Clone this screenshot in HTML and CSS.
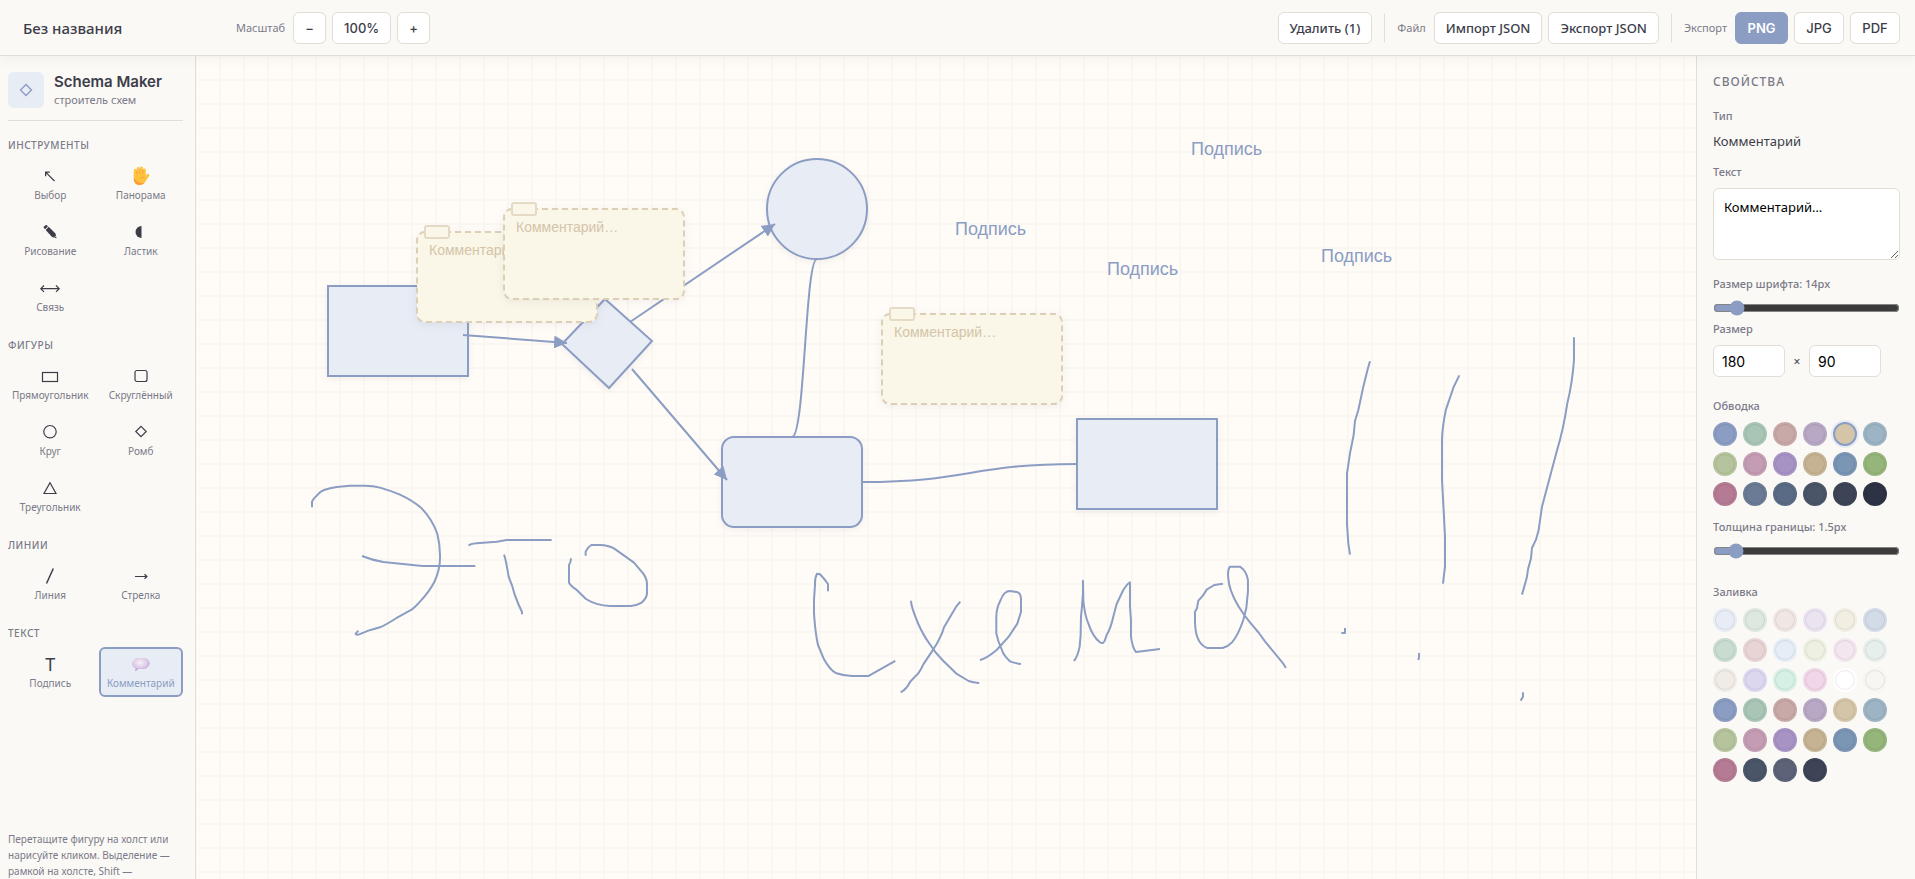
FILE: index.html
```html
<!DOCTYPE html>
<html lang="ru">
  <head>
    <meta charset="UTF-8" />
    <meta name="viewport" content="width=device-width, initial-scale=1.0" />
    <title>Schema Maker</title>
    <link rel="stylesheet" href="styles.css">
  </head>
  <body>
    <div class="app">
      <header class="topbar">
        <input type="text" class="doc-title" value="Без названия" aria-label="Название документа" />
        <div class="toolbar zoom-group">
          <span class="toolbar-label">Масштаб</span>
          <button class="btn btn-icon">−</button>
          <button class="btn btn-zoom">100%</button>
          <button class="btn btn-icon">+</button>
        </div>
        <div class="toolbar file-group">
          <button class="btn">Удалить (1)</button>
          <span class="divider"></span>
          <span class="toolbar-label">Файл</span>
          <button class="btn">Импорт JSON</button>
          <button class="btn">Экспорт JSON</button>
          <span class="divider"></span>
          <span class="toolbar-label">Экспорт</span>
          <button class="btn btn-format btn-primary">PNG</button>
          <button class="btn btn-format">JPG</button>
          <button class="btn btn-format">PDF</button>
        </div>
      </header>

      <div class="workspace">
        <aside class="sidebar">
          <div class="brand">
            <div class="brand-logo">
              <svg width="14" height="14" viewBox="0 0 14 14"><path d="M7 1.5L12.5 7L7 12.5L1.5 7Z" fill="none" stroke="#8b9dc3" stroke-width="1.4" /></svg>
            </div>
            <div>
              <h1 class="brand-name">Schema Maker</h1>
              <p class="brand-sub">строитель схем</p>
            </div>
          </div>

          <section class="tool-section">
            <h2 class="section-title">Инструменты</h2>
            <div class="tool-grid">
              <button class="tool">
                <svg class="tool-icon" viewBox="0 0 24 24"><path d="M16.5 17L7.6 8.1M7.6 12.3V8.1H11.8" /></svg>
                <span>Выбор</span>
              </button>
              <button class="tool">
                <svg class="tool-icon" viewBox="0 0 24 24">
                  <g fill="none" stroke="#ffc23d" stroke-width="2.8" stroke-linecap="round">
                    <path d="M6.2 12V6.5M9.2 10V4.3M12.3 10V4M15.3 11V5.8M15.5 16L19 11.2" />
                  </g>
                  <path d="M4.8 9.5H16.7V13L18 13.5C17 18 14.500 21 10.500 21C7 21 4.800 18.500 4.800 14.500Z" fill="#ffc23d" stroke="none" />
                  <path d="M4.800 14.500C4.900 18.500 7 21 10.500 21C12.800 21 14.500 20 15.600 18.500C12 20 8 18.500 6.500 15.500Z" fill="#ff9b35" stroke="none" />
                  <path d="M7.700 6.500V10M10.800 5V9.800M13.800 5.500V10.200M11.500 14.500C12.500 13.200 14 13 15.300 13.500" stroke="#f0972c" stroke-width=".7" />
                </svg>
                <span>Панорама</span>
              </button>
              <button class="tool">
                <svg class="tool-icon" viewBox="0 0 24 24">
                  <path d="M6 6.500L8.200 4.800L10 6.200L7.200 9.200L5.500 7.500Z M10.700 6.800L17.500 13.500L18.500 18.200L14 17L7.700 10Z" class="solid" />
                  <path d="M16.300 17.500L18 15.800" stroke="#faf9f6" stroke-width=".8" />
                </svg>
                <span>Рисование</span>
              </button>
              <button class="tool">
                <svg class="tool-icon" viewBox="0 0 24 24"><path d="M12.500 6A6 6 0 0 0 12.500 18Z" class="solid" /></svg>
                <span>Ластик</span>
              </button>
              <button class="tool">
                <svg class="tool-icon" viewBox="0 0 24 24"><path d="M2.800 12.700H21.200M6 9.500L2.800 12.700L6 15.900M18 9.500L21.200 12.700L18 15.900" /></svg>
                <span>Связь</span>
              </button>
            </div>
          </section>

          <section class="tool-section">
            <h2 class="section-title">Фигуры</h2>
            <div class="tool-grid">
              <button class="tool">
                <svg class="tool-icon" viewBox="0 0 24 24"><rect x="4.500" y="8.500" width="15" height="9" /></svg>
                <span>Прямоугольник</span>
              </button>
              <button class="tool">
                <svg class="tool-icon" viewBox="0 0 24 24"><rect x="6" y="6.500" width="12" height="11" rx="2" /></svg>
                <span>Скруглённый</span>
              </button>
              <button class="tool">
                <svg class="tool-icon" viewBox="0 0 24 24"><circle cx="12" cy="11.700" r="6.200" /></svg>
                <span>Круг</span>
              </button>
              <button class="tool">
                <svg class="tool-icon" viewBox="0 0 24 24"><path d="M12 6.300L17.200 11.500L12 16.700L6.800 11.500Z" /></svg>
                <span>Ромб</span>
              </button>
              <button class="tool">
                <svg class="tool-icon" viewBox="0 0 24 24"><path d="M12 6.800L18 17.500H6Z" /></svg>
                <span>Треугольник</span>
              </button>
            </div>
          </section>

          <section class="tool-section">
            <h2 class="section-title">Линии</h2>
            <div class="tool-grid">
              <button class="tool">
                <svg class="tool-icon" viewBox="0 0 24 24"><path d="M8.500 19.500L15.300 4.500" stroke-width="1.500" /></svg>
                <span>Линия</span>
              </button>
              <button class="tool">
                <svg class="tool-icon" viewBox="0 0 24 24"><path d="M6 12.500H18M15.500 10.200L18 12.500L15.500 14.800" /></svg>
                <span>Стрелка</span>
              </button>
            </div>
          </section>

          <section class="tool-section">
            <h2 class="section-title">Текст</h2>
            <div class="tool-grid">
              <button class="tool">
                <span class="tool-glyph">T</span>
                <span>Подпись</span>
              </button>
              <button class="tool active">
                <svg class="tool-icon" viewBox="0 0 24 24">
                  <defs>
                    <radialGradient id="bubble" cx="45%" cy="35%" r="65%">
                      <stop offset="0" stop-color="#f8f0f8" />
                      <stop offset=".6" stop-color="#dccbe6" />
                      <stop offset="1" stop-color="#b195d2" />
                    </radialGradient>
                  </defs>
                  <path d="M9 6H15.500C18.500 6.300 20.500 9 21 11.500C20 14.500 17.500 16.800 14.500 17H9.500L6.300 19.200L6.500 16.200C4.500 15 3.300 13.500 3 11.500C3.800 8.500 6 6.200 9 6Z" fill="url(#bubble)" stroke="none" />
                </svg>
                <span>Комментарий</span>
              </button>
            </div>
          </section>

          <p class="hint">Перетащите фигуру на холст или нарисуйте кликом. Выделение — рамкой на холсте, Shift —</p>
        </aside>

        <main class="canvas">
          <svg class="canvas-svg" width="100%" height="100%">
            <defs>
              <pattern id="grid" width="24" height="24" patternUnits="userSpaceOnUse">
                <path d="M0 0H24M0 24H24M0 0V24M24 0V24" class="grid-line" />
              </pattern>
              <marker id="arrow" viewBox="0 0 12 12" refX="12" refY="6" markerWidth="13" markerHeight="13" markerUnits="userSpaceOnUse" orient="auto">
                <path d="M0 0L12 6L0 12Z" fill="#8b9dc3" />
              </marker>
            </defs>
            <rect width="100%" height="100%" fill="url(#grid)" />

            <g transform="translate(-196 -56)">
              <!-- фигуры -->
              <rect class="shape" x="328" y="286" width="140" height="90" />
              <path class="shape" d="M605 299L652 341L609 388L562 344Z" />
              <circle class="shape" cx="817" cy="209" r="50" />
              <rect class="shape" x="722" y="437" width="140" height="90" rx="12" />
              <rect class="shape" x="1077" y="419" width="140" height="90" />

              <!-- связи и стрелки -->
              <path class="link" d="M817 259C805 259 805 437 792 437" />
              <path class="link" d="M862 482C970 482 970 464 1077 464" />
              <path class="link" d="M463 335L567 343" marker-end="url(#arrow)" />
              <path class="link" d="M630 322L775 224" marker-end="url(#arrow)" />
              <path class="link" d="M632 369L727 480" marker-end="url(#arrow)" />

              <!-- комментарии -->
              <g class="note" transform="translate(417 232)">
                <rect class="note-body" width="180" height="90" rx="8" />
                <rect class="note-tab" x="8" y="-6" width="24" height="12" rx="2" />
                <text x="12" y="23">Комментарий…</text>
              </g>
              <g class="note" transform="translate(504 209)">
                <rect class="note-body" width="180" height="90" rx="8" />
                <rect class="note-tab" x="8" y="-6" width="24" height="12" rx="2" />
                <text x="12" y="23">Комментарий…</text>
              </g>
              <g class="note" transform="translate(882 314)">
                <rect class="note-body" width="180" height="90" rx="8" />
                <rect class="note-tab" x="8" y="-6" width="24" height="12" rx="2" />
                <text x="12" y="23">Комментарий…</text>
              </g>

              <!-- подписи -->
              <text class="caption" x="1191" y="155">Подпись</text>
              <text class="caption" x="955" y="235">Подпись</text>
              <text class="caption" x="1107" y="275">Подпись</text>
              <text class="caption" x="1321" y="262">Подпись</text>

              <!-- рисование от руки -->
              <g class="ink" transform="translate(300 460) scale(.3333)">
                <path d="M36 142V125Q40 115 50 107Q60 94 72 90Q90 84 110 81L150 77H195Q220 77 240 83Q275 93 300 104Q340 123 365 145Q398 180 412 222Q421 255 420 295Q420 330 403 366Q388 395 360 425Q347 440 336 448L290 474Q255 496 240 502Q222 507 205 512L185 520Q168 528 167 521L175 512" />
                <path d="M186 288Q215 300 250 306L360 317Q370 318 380 318H526" />
                <path d="M506 257Q510 252 530 250L590 245L620 240H755" />
                <path d="M612 284Q617 295 626 350L636 376Q643 405 655 432L666 456V463" />
                <path d="M857 287V275Q862 262 874 255H900Q925 256 942 265L1002 308L1030 341Q1041 358 1041 370V402Q1039 415 1025 428Q1010 437 992 438H930Q890 437 858 417L828 388Q810 376 807 367V315Q813 308 813 295" />
              </g>
              <g class="ink" transform="translate(780 540) scale(.3333)">
                <path d="M144 154V132Q132 115 120 103L111 101Q104 115 105 135L102 180V220Q106 280 114 315L132 358Q150 390 167 399Q190 407 215 408H266L346 363" />
                <path d="M393 182Q393 200 415 252Q430 285 445 306Q465 338 488 361L528 400L566 423Q580 428 595 429V426" />
                <path d="M541 185L528 201L492 262Q487 282 470 312L460 328L430 373Q418 400 405 410L390 426Q380 448 362 457" />
                <path d="M600 360Q620 355 650 330L687 289L712 251L723 216V175Q722 158 710 156L690 153Q672 153 662 180Q649 205 649 230V280Q653 302 665 328Q670 346 690 364Q705 370 723 372" />
                <path d="M882 363Q893 350 899 320L902 285L903 230L906 200L909 160V122L910 180Q914 225 925 250Q938 290 960 307Q971 313 975 300L980 285Q992 265 1000 230L1010 192L1030 150Q1043 130 1050 127V200L1053 240V290Q1058 325 1068 336L1140 327" />
                <path d="M1329 131L1303 135L1280 149Q1270 168 1255 182L1251 205L1245 216V245Q1246 285 1258 304Q1268 320 1282 324H1328Q1345 319 1356 307Q1375 285 1390 240L1399 205L1404 155V120Q1399 92 1380 80H1350Q1342 90 1345 115Q1347 150 1375 198Q1390 223 1410 247L1437 279L1455 304L1510 371L1518 384" />
              </g>
              <g class="ink" transform="translate(1280 320) scale(.3333)">
                <path d="M270 124L263 148L250 200L235 270L225 303L221 345L210 400L201 460V612L205 670L210 704" />
                <path d="M538 166L521 201L498 268Q487 320 486 360V480L492 590L495 650V740L489 791" />
                <path d="M882 52V120Q877 190 862 250Q850 330 830 395L786 560L776 630L768 659L756 684L753 715Q743 745 740 775L726 824" />
                <path d="M195 924V939H184" />
                <path d="M417 999V1012L415 1020" />
                <path d="M729 1117V1130L722 1142" />
              </g>
            </g>
          </svg>
        </main>

        <aside class="props">
          <h2 class="props-title">Свойства</h2>
          <div class="field">
            <span class="field-label">Тип</span>
            <span class="field-value">Комментарий</span>
          </div>
          <div class="field">
            <label class="field-label" for="text">Текст</label>
            <textarea id="text" class="text-input">Комментарий…</textarea>
          </div>
          <div class="field field-font">
            <label class="field-label" for="fontSize">Размер шрифта: 14px</label>
            <input type="range" id="fontSize" min="8" max="72" value="14" />
          </div>
          <div class="field field-size">
            <label class="field-label" for="sizeW">Размер</label>
            <div class="size-row">
              <input type="text" id="sizeW" class="num-input" value="180" />
              <span>×</span>
              <input type="text" class="num-input" value="90" aria-label="Высота" />
            </div>
          </div>
          <div class="field field-palette">
            <span class="field-label">Обводка</span>
            <div class="swatches">
              <button class="swatch" style="background-color: #8b9dc3" aria-label="#8b9dc3"></button>
              <button class="swatch" style="background-color: #a8c5b5" aria-label="#a8c5b5"></button>
              <button class="swatch" style="background-color: #c9a8a8" aria-label="#c9a8a8"></button>
              <button class="swatch" style="background-color: #b8a8c5" aria-label="#b8a8c5"></button>
              <button class="swatch selected" style="background-color: #d4c5a8" aria-label="#d4c5a8"></button>
              <button class="swatch" style="background-color: #9db4c5" aria-label="#9db4c5"></button>
              <button class="swatch" style="background-color: #b5c49d" aria-label="#b5c49d"></button>
              <button class="swatch" style="background-color: #c49db5" aria-label="#c49db5"></button>
              <button class="swatch" style="background-color: #a893c5" aria-label="#a893c5"></button>
              <button class="swatch" style="background-color: #c5b393" aria-label="#c5b393"></button>
              <button class="swatch" style="background-color: #7b95b5" aria-label="#7b95b5"></button>
              <button class="swatch" style="background-color: #95b57b" aria-label="#95b57b"></button>
              <button class="swatch" style="background-color: #b57b95" aria-label="#b57b95"></button>
              <button class="swatch" style="background-color: #6b7b95" aria-label="#6b7b95"></button>
              <button class="swatch" style="background-color: #5a6b85" aria-label="#5a6b85"></button>
              <button class="swatch" style="background-color: #4a5568" aria-label="#4a5568"></button>
              <button class="swatch" style="background-color: #3d4455" aria-label="#3d4455"></button>
              <button class="swatch" style="background-color: #2d3345" aria-label="#2d3345"></button>
            </div>
          </div>
          <div class="field field-stroke">
            <label class="field-label" for="strokeWidth">Толщина границы: 1.5px</label>
            <input type="range" id="strokeWidth" min="0.5" max="12" step="0.5" value="1.5" />
          </div>
          <div class="field field-fill">
            <span class="field-label">Заливка</span>
            <div class="swatches">
              <button class="swatch" style="background-color: #e8ecf5" aria-label="#e8ecf5"></button>
              <button class="swatch" style="background-color: #dde8e0" aria-label="#dde8e0"></button>
              <button class="swatch" style="background-color: #f0e6e4" aria-label="#f0e6e4"></button>
              <button class="swatch" style="background-color: #ebe3f0" aria-label="#ebe3f0"></button>
              <button class="swatch" style="background-color: #f3eee2" aria-label="#f3eee2"></button>
              <button class="swatch" style="background-color: #d4dbe8" aria-label="#d4dbe8"></button>
              <button class="swatch" style="background-color: #c8ddd0" aria-label="#c8ddd0"></button>
              <button class="swatch" style="background-color: #e8d4d4" aria-label="#e8d4d4"></button>
              <button class="swatch" style="background-color: #e5eef6" aria-label="#e5eef6"></button>
              <button class="swatch" style="background-color: #eef0e2" aria-label="#eef0e2"></button>
              <button class="swatch" style="background-color: #f3e6ef" aria-label="#f3e6ef"></button>
              <button class="swatch" style="background-color: #e6efec" aria-label="#e6efec"></button>
              <button class="swatch" style="background-color: #f0ebe5" aria-label="#f0ebe5"></button>
              <button class="swatch" style="background-color: #ddd6f0" aria-label="#ddd6f0"></button>
              <button class="swatch" style="background-color: #d6f0e6" aria-label="#d6f0e6"></button>
              <button class="swatch" style="background-color: #f0d6e8" aria-label="#f0d6e8"></button>
              <button class="swatch" style="background-color: #ffffff" aria-label="#ffffff"></button>
              <button class="swatch" style="background-color: #f8f6f2" aria-label="#f8f6f2"></button>
              <button class="swatch" style="background-color: #8b9dc3" aria-label="#8b9dc3"></button>
              <button class="swatch" style="background-color: #a8c5b5" aria-label="#a8c5b5"></button>
              <button class="swatch" style="background-color: #c9a8a8" aria-label="#c9a8a8"></button>
              <button class="swatch" style="background-color: #b8a8c5" aria-label="#b8a8c5"></button>
              <button class="swatch" style="background-color: #d4c5a8" aria-label="#d4c5a8"></button>
              <button class="swatch" style="background-color: #9db4c5" aria-label="#9db4c5"></button>
              <button class="swatch" style="background-color: #b5c49d" aria-label="#b5c49d"></button>
              <button class="swatch" style="background-color: #c49db5" aria-label="#c49db5"></button>
              <button class="swatch" style="background-color: #a893c5" aria-label="#a893c5"></button>
              <button class="swatch" style="background-color: #c5b393" aria-label="#c5b393"></button>
              <button class="swatch" style="background-color: #7b95b5" aria-label="#7b95b5"></button>
              <button class="swatch" style="background-color: #95b57b" aria-label="#95b57b"></button>
              <button class="swatch" style="background-color: #b57b95" aria-label="#b57b95"></button>
              <button class="swatch" style="background-color: #4a5568" aria-label="#4a5568"></button>
              <button class="swatch" style="background-color: #5c6378" aria-label="#5c6378"></button>
              <button class="swatch" style="background-color: #3d4455" aria-label="#3d4455"></button>
            </div>
          </div>
        </aside>
      </div>
    </div>
  </body>
</html>
```

FILE: styles.css
```css
* {
  margin: 0;
  padding: 0;
  box-sizing: border-box;
}

body {
  font-family: "Noto Sans", "Open Sans", sans-serif;
  font-size: 14px;
  color: #3d3d4a;
  background: #faf9f6;
}

button,
input,
textarea {
  font-family: inherit;
}

.app {
  display: flex;
  flex-direction: column;
  height: 100vh;
  overflow: hidden;
}

/* верхняя панель */
.topbar {
  display: flex;
  align-items: center;
  height: 56px;
  flex-shrink: 0;
  padding: 0 15px 0 11px;
  background: #faf9f6;
  border-bottom: 1px solid #e2ded6;
  box-shadow: 0 2px 12px rgba(61, 61, 74, 0.06);
  position: relative;
  z-index: 2;
}

.doc-title {
  width: 200px;
  padding: 4px 12px;
  border: none;
  background: transparent;
  font-size: 15px;
  font-weight: 500;
  color: #3d3d4a;
}

.toolbar {
  display: flex;
  align-items: center;
  gap: 6px;
}

.zoom-group {
  margin-left: 25px;
}

.file-group {
  margin-left: auto;
}

.toolbar-label {
  font-size: 11px;
  color: #7a7a88;
  margin-right: 2px;
}

.divider {
  width: 1px;
  height: 28px;
  margin: 0 6px;
  background: #e2ded6;
}

.btn {
  height: 32px;
  padding: 0 11px;
  border: 1px solid #e2ded6;
  border-radius: 6px;
  background: #fff;
  color: #3d3d4a;
  font-size: 13px;
  font-weight: 500;
  white-space: nowrap;
  cursor: pointer;
}

.btn-icon,
.btn-zoom,
.btn-format {
  padding: 0;
  font-family: Inter, sans-serif;
}

.btn-icon {
  width: 33px;
}

.btn-zoom {
  width: 59px;
}

.btn-format {
  width: 50px;
}

.btn:hover {
  background: #e8ecf5;
}

.btn-primary {
  width: 53px;
  background: #8b9dc3;
  border-color: #8b9dc3;
  color: #fff;
  font-weight: 600;
}

.workspace {
  display: flex;
  flex: 1;
  min-height: 0;
}

/* левая панель */
.sidebar {
  display: flex;
  flex-direction: column;
  gap: 16px;
  width: 196px;
  flex-shrink: 0;
  padding: 16px 12px 0 8px;
  border-right: 1px solid #e2ded6;
  overflow: hidden;
}

.brand {
  display: flex;
  align-items: center;
  gap: 10px;
  padding-bottom: 12px;
  border-bottom: 1px solid #e2ded6;
}

.brand-logo {
  display: flex;
  align-items: center;
  justify-content: center;
  width: 36px;
  height: 36px;
  border-radius: 6px;
  background: #e8ecf5;
}

.brand-name {
  font-family: Inter, sans-serif;
  font-size: 15px;
  font-weight: 600;
  line-height: 20px;
}

.brand-sub {
  font-size: 11px;
  line-height: 16px;
  color: #7a7a88;
}

.section-title {
  margin-bottom: 6px;
  font-size: 10px;
  font-weight: 500;
  line-height: 16px;
  letter-spacing: 0.05em;
  text-transform: uppercase;
  color: #7a7a88;
}

.tool-grid {
  display: grid;
  grid-template-columns: 1fr 1fr;
  gap: 6px;
}

.tool {
  display: flex;
  flex-direction: column;
  align-items: center;
  height: 50px;
  padding-top: 3px;
  border: 2px solid transparent;
  border-radius: 6px;
  background: transparent;
  font-size: 10px;
  line-height: 14px;
  color: #7a7a88;
  cursor: pointer;
}

.tool.active {
  border-color: #8b9dc3;
  background: #e8ecf5;
  color: #8b9dc3;
}

.tool-icon {
  width: 24px;
  height: 24px;
  fill: none;
  stroke: #3d3d4a;
  stroke-width: 1.2;
}

.tool-icon .solid {
  fill: #3d3d4a;
  stroke: none;
}

.tool-glyph {
  font-size: 18px;
  line-height: 24px;
  color: #3d3d4a;
}

.hint {
  margin-top: auto;
  font-size: 10px;
  line-height: 16px;
  color: #7a7a88;
}

/* холст */
.canvas {
  flex: 1;
  min-width: 0;
  background: #fffcf8;
}

.canvas-svg {
  display: block;
}

.grid-line {
  stroke: #faf7f3;
  stroke-width: 2;
}

.shape {
  fill: #e8ecf5;
  stroke: #8b9dc3;
  stroke-width: 2;
  filter: drop-shadow(0 2px 3px rgba(61, 61, 74, 0.08));
}

.link {
  fill: none;
  stroke: #8b9dc3;
  stroke-width: 2;
}

.ink path {
  fill: none;
  stroke: #8b9dc3;
  stroke-width: 2;
  stroke-linejoin: round;
  vector-effect: non-scaling-stroke;
}

.note-body {
  fill: #faf6e8;
  stroke: #dccfb6;
  stroke-width: 2;
  stroke-dasharray: 6 4;
  filter: drop-shadow(0 2px 4px rgba(61, 61, 74, 0.08));
}

.note-tab {
  fill: #faf6e8;
  stroke: #e5dac5;
  stroke-width: 2;
}

.note text {
  font: 14px "Liberation Sans", Arial, sans-serif;
  fill: #d4c5a8;
}

.caption {
  font: 18px "Liberation Sans", Arial, sans-serif;
  fill: #8b9dc3;
}

/* свойства */
.props {
  width: 219px;
  flex-shrink: 0;
  padding: 16px 15px 16px 16px;
  border-left: 1px solid #e2ded6;
  overflow: hidden;
}

.props-title {
  margin-bottom: 16px;
  font-size: 12px;
  font-weight: 500;
  line-height: 20px;
  letter-spacing: 1px;
  text-transform: uppercase;
  color: #7a7a88;
}

.field {
  display: flex;
  flex-direction: column;
  gap: 8px;
  margin-top: 12px;
}

.field-font {
  margin-top: 16px;
}

.field-size {
  margin-top: 5px;
}

.field-palette {
  margin-top: 21px;
}

.field-stroke {
  margin-top: 13px;
}

.field-fill {
  margin-top: 25px;
}

.field-label {
  font-size: 11px;
  font-weight: 500;
  line-height: 16px;
  color: #7a7a88;
}

.field-value {
  font-size: 13px;
  line-height: 18px;
  margin-bottom: 2px;
}

.text-input {
  width: 100%;
  height: 72px;
  padding: 9px 10px;
  border: 1px solid #e2ded6;
  border-radius: 6px;
  background: #fff;
  font-size: 13px;
  color: #000;
  resize: vertical;
}

input[type="range"] {
  height: 16px;
  accent-color: #8b9dc3;
}

.size-row {
  display: flex;
  align-items: center;
  gap: 8px;
  font-size: 12px;
}

.size-row span {
  width: 8px;
  text-align: center;
}

.num-input {
  width: 72px;
  height: 32px;
  padding: 0 8px;
  border: 1px solid #e2ded6;
  border-radius: 6px;
  background: #fff;
  font-family: Inter, sans-serif;
  font-size: 14px;
  color: #000;
}

.swatches {
  display: flex;
  flex-wrap: wrap;
  gap: 6px;
}

.swatch {
  width: 24px;
  height: 24px;
  border: 2px solid transparent;
  border-radius: 50%;
  box-shadow: inset 0 0 0 1px rgba(0, 0, 0, 0.08);
  cursor: pointer;
}

.swatch.selected {
  border-color: #8b9dc3;
  box-shadow: 0 0 0 2px #e8ecf5;
}
```
